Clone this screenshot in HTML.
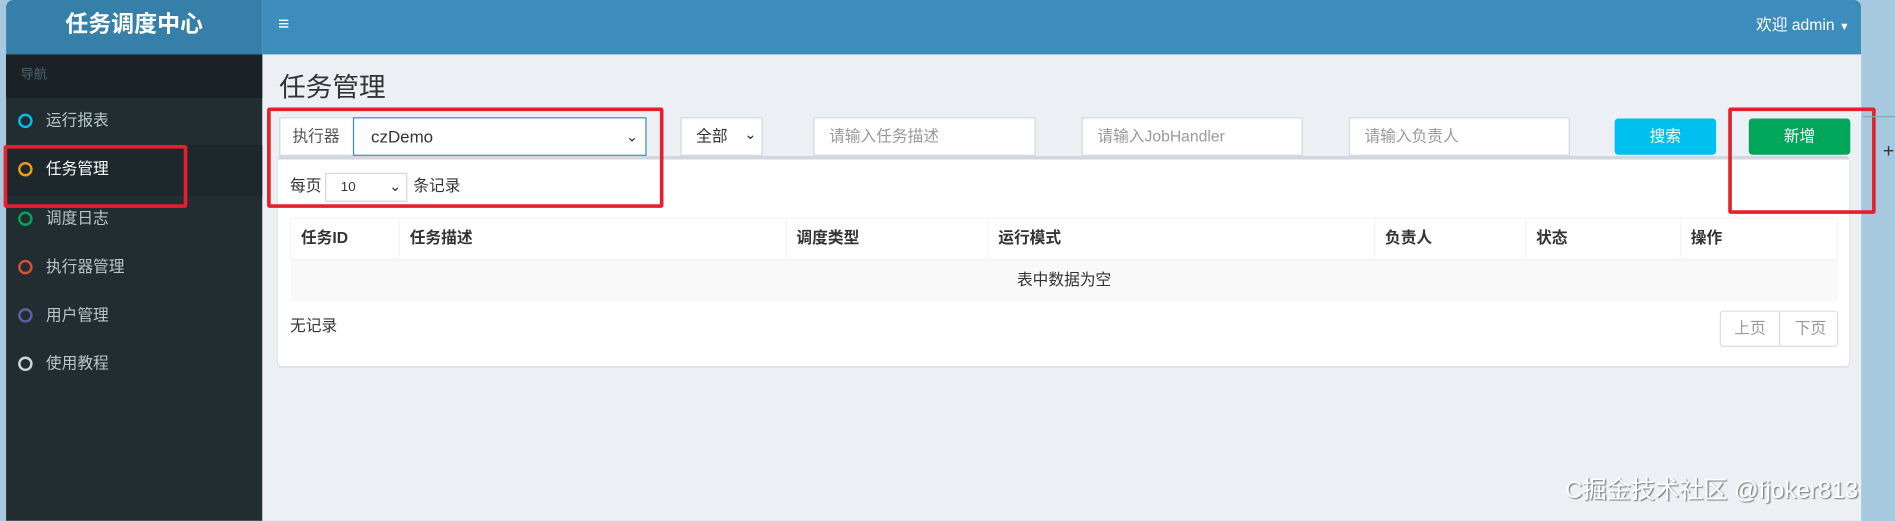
<!DOCTYPE html>
<html><head><meta charset="utf-8"><style>
html,body{margin:0;padding:0;width:1895px;height:521px;overflow:hidden;background:#a7c9df}
#w{position:absolute;left:0;top:0;width:1568px;height:431px;transform:scale(1.20855);transform-origin:0 0;font-family:"Liberation Sans","Noto Sans CJK SC",sans-serif;font-size:13px;color:#333;line-height:16px}
.a{position:absolute;box-sizing:border-box}
.ci{position:absolute;left:15px;width:12px;height:12px;border-radius:50%;border:2px solid;box-sizing:border-box}
.mi{position:absolute;left:38px;color:#b8c7ce;font-size:13px;line-height:16px}
.inp{background:#fff;border:1px solid #d2d6de;height:32px;top:97px;color:#999;padding:0 12px;line-height:30px;font-size:13px}
th,td{box-sizing:border-box}
</style></head><body><div id="w">
<div class="a" style="left:5px;top:0;width:1535px;height:431px;background:#ecf0f5;border-radius:6px 6px 0 0;overflow:hidden">
 <div class="a" style="left:0;top:0;width:212px;height:45px;background:#367fa9;color:#fff;font-weight:bold;font-size:19px;text-align:center;line-height:42px">任务调度中心</div>
 <div class="a" style="left:212px;top:0;right:0;height:45px;background:#3c8dbc"></div>
 <div class="a" style="left:225px;top:12px;color:#fff;font-size:16px;font-weight:bold;line-height:18px">≡</div>
 <div class="a" style="left:1448px;top:13px;color:#fff;font-size:13px">欢迎 admin <span style="font-size:9px">▼</span></div>
 <div class="a" style="left:0;top:45px;width:212px;height:386px;background:#222d32"></div>
 <div class="a" style="left:0;top:45px;width:212px;height:36px;background:#1a2226;color:#4b646f;font-size:11px;padding:9px 12px">导航</div>
 <div class="a" style="left:0;top:120px;width:212px;height:42px;background:#1e282c"></div>
</div>
<div class="ci" style="top:94px;border-color:#00c0ef"></div><div class="mi" style="top:92px">运行报表</div>
<div class="ci" style="top:134px;border-color:#f39c12"></div><div class="mi" style="top:132px;color:#fff">任务管理</div>
<div class="ci" style="top:175px;border-color:#00a65a"></div><div class="mi" style="top:173px">调度日志</div>
<div class="ci" style="top:215px;border-color:#dd4b39"></div><div class="mi" style="top:213px">执行器管理</div>
<div class="ci" style="top:255px;border-color:#605ca8"></div><div class="mi" style="top:253px">用户管理</div>
<div class="ci" style="top:295px;border-color:#d2d6de"></div><div class="mi" style="top:293px">使用教程</div>

<div class="a" style="left:231px;top:60px;font-size:22px;line-height:26px;color:#333">任务管理</div>
<div class="a" style="left:230px;top:129px;width:1300px;height:174px;background:#fff;border-top:3px solid #d2d6de;border-radius:3px;box-shadow:0 1px 1px rgba(0,0,0,.1)"></div>
<div class="a" style="left:231px;top:97px;width:62px;height:32px;background:#fff;border:1px solid #d2d6de;padding:0 10px;line-height:30px;color:#555">执行器</div>
<div class="a" style="left:292px;top:97px;width:243px;height:32px;background:#fff;border:1px solid #3c8dbc;padding:0 14px;line-height:30px;color:#333;font-size:14px">czDemo<span style="position:absolute;right:6px;top:0;font-size:12px">⌄</span></div>
<div class="a" style="left:563px;top:97px;width:68px;height:32px;background:#fff;border:1px solid #d2d6de;padding:0 12px;line-height:30px;color:#333">全部<span style="position:absolute;right:4px;top:-2px;font-size:12px">⌄</span></div>
<div class="a inp" style="left:673px;width:184px">请输入任务描述</div>
<div class="a inp" style="left:895px;width:183px">请输入JobHandler</div>
<div class="a inp" style="left:1116px;width:183px">请输入负责人</div>
<div class="a" style="left:1336px;top:98px;width:84px;height:30px;background:#00c0ef;color:#fff;text-align:center;line-height:29px;border-radius:3px">搜索</div>
<div class="a" style="left:1447px;top:98px;width:84px;height:30px;background:#00a65a;color:#fff;text-align:center;line-height:29px;border-radius:3px">新增</div>

<div class="a" style="left:240px;top:146px">每页</div>
<div class="a" style="left:269px;top:143px;width:68px;height:24px;border:1px solid #d2d6de;padding:0 12px;line-height:22px;font-size:11px">10<span style="position:absolute;right:4px;top:-1px;font-size:12px">⌄</span></div>
<div class="a" style="left:342px;top:146px">条记录</div>

<table class="a" style="left:240px;top:180px;width:1281px;border-collapse:collapse;font-size:13px">
<tr style="height:34px;font-weight:bold;text-align:left">
<th style="width:90px;padding-left:8px;border:1px solid #f4f4f4">任务ID</th><th style="width:320px;padding-left:8px;border:1px solid #f4f4f4">任务描述</th><th style="width:167px;padding-left:8px;border:1px solid #f4f4f4">调度类型</th><th style="width:320px;padding-left:8px;border:1px solid #f4f4f4">运行模式</th><th style="width:125px;padding-left:8px;border:1px solid #f4f4f4">负责人</th><th style="width:128px;padding-left:8px;border:1px solid #f4f4f4">状态</th><th style="padding-left:8px;border:1px solid #f4f4f4">操作</th></tr>
<tr style="height:34px;background:#f9f9f9"><td colspan="7" style="text-align:center;border-top:2px solid #f4f4f4">表中数据为空</td></tr>
</table>
<div class="a" style="left:240px;top:262px">无记录</div>
<div class="a" style="left:1423px;top:257px;width:98px;height:30px;border:1px solid #ddd;border-radius:3px;color:#999;line-height:28px"><span style="position:absolute;left:11px;top:0">上页</span><span style="position:absolute;left:48px;top:0;width:1px;height:28px;background:#ddd"></span><span style="position:absolute;left:61px;top:0">下页</span></div>

<div class="a" style="left:221px;top:89px;width:328px;height:83px;border:3px solid #e3202b;border-radius:2px"></div>
<div class="a" style="left:3px;top:120px;width:152px;height:52px;border:3px solid #e3202b;border-radius:2px"></div>
<div class="a" style="left:1430px;top:89px;width:122px;height:88px;border:3px solid #e3202b;border-radius:2px"></div>
<div class="a" style="left:1541px;top:96px;width:27px;height:1px;background:#8aa"></div>
<div class="a" style="left:1558px;top:118px;font-size:16px;color:#333">+</div>
<div class="a" style="left:1295px;top:394px;font-size:20px;line-height:24px;color:#fff;text-shadow:1px 1px 1px #777">C掘金技术社区 @fjoker813</div>
</div></body></html>
